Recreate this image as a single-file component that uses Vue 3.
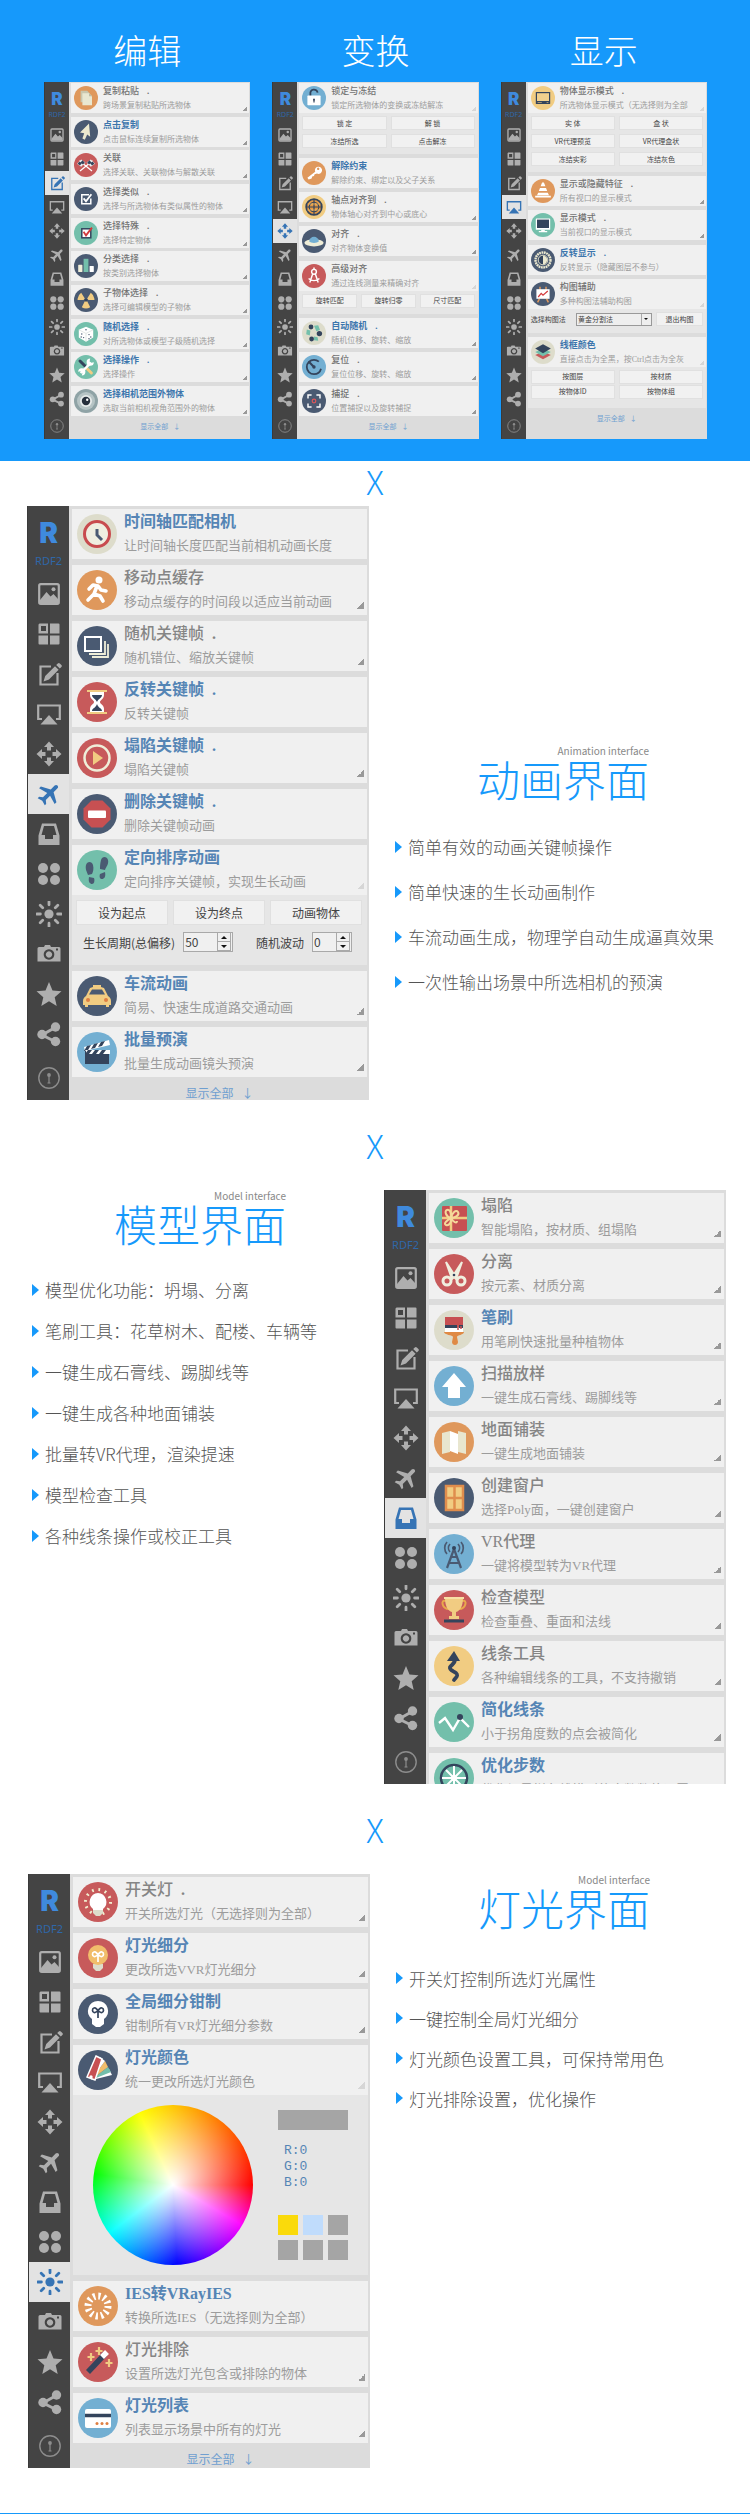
<script setup>
const NAVY = '#4a5a72'
const RED = '#c75a5b'
const ORANGE = '#df985c'
const GREEN = '#73bfab'
const BLUE = '#73afd2'
const CREAM = '#dddccb'
const YELLOW = '#f1cc82'

const navIcons = {
  图像: '<rect x="3.2" y="3.2" width="19.6" height="19.6" rx="1.5" fill="none" stroke="currentColor" stroke-width="2.2"/><circle cx="17.5" cy="8.2" r="2" fill="currentColor"/><path d="M4 19l6.500-8 4 4.500 3-2.500 4.500 5v4H4z" fill="currentColor"/>',
  布局: '<path d="M3.500 2.500h8.500v10H2.500v-9zM5 5v5h5V5z" fill-rule="evenodd" fill="currentColor"/><path d="M14 2.500h8.500a1 1 0 0 1 1 1v9H14zM2.500 14.500H12v9H3.500a1 1 0 0 1-1-1zM14 14.500h9.500v8a1 1 0 0 1-1 1H14z" fill="currentColor"/>',
  编辑: '<path d="M15 5.500H4.500v18h17V12" fill="none" stroke="currentColor" stroke-width="2.200"/><path d="M7.500 20.500l1.700-5.500L19 5.200l3.600 3.600L13 18.500zM20.200 4l1.600-1.600a1.500 1.500 0 0 1 2 0l1.600 1.600a1.500 1.500 0 0 1 0 2l-1.600 1.600z" fill="currentColor"/>',
  显示: '<path d="M6 18H2.200V4.500h21.600V18H20" fill="none" stroke="currentColor" stroke-width="2.200"/><path d="M13 14l8.500 9.500h-17z" fill="currentColor"/>',
  变换: '<path d="M13 .5l5 5.500h-3v3.500h-4V6H8zM13 25.500L8 20h3v-3.500h4V20h3zM.5 13L6 8v3h3.500v4H6v3zM25.500 13L20 18v-3h-3.500v-4H20V8z" fill="currentColor"/>',
  动画: '<path transform="rotate(45 13 13) translate(1 0)" d="M23 16v-2.500l-9-5V3c0-1.200-.9-2-2-2s-2 .8-2 2v5.500l-9 5V16l9-2.500v6l-3 2.500v2l5-1.500 5 1.500v-2l-3-2.500v-6z" fill="currentColor"/>',
  模型: '<path d="M6 2.500h14l3.500 12V24h-21v-9.500zM8 5l-2.500 9H9v4h8v-4h3.500L18 5z" fill-rule="evenodd" fill="currentColor"/>',
  组件: '<g fill="currentColor"><circle cx="7" cy="7" r="5"/><circle cx="19" cy="7" r="5"/><circle cx="7" cy="19" r="5"/><circle cx="19" cy="19" r="5"/></g>',
  灯光: '<circle cx="13" cy="13" r="4.600" fill="currentColor"/><path d="M13 .8v3M13 22.200v3M.8 13h3.600M21.600 13h3.600M4.200 4.200l2.500 2.500M19.300 19.300l2.500 2.500M4.200 21.800l2.500-2.500M19.300 6.700l2.500-2.500" stroke="currentColor" stroke-width="2.800" stroke-linecap="round"/>',
  相机: '<path d="M3 6h5l1-2h5l1 2h8a1.500 1.500 0 0 1 1.500 1.500v13H1.500v-13A1.500 1.500 0 0 1 3 6zM13 8.200a5.300 5.300 0 1 0 .01 0zM13 10.300a3.200 3.200 0 1 1-.01 0zM20 7.500v2h2v-2z" fill-rule="evenodd" fill="currentColor"/>',
  收藏: '<path d="M13 1l3.500 8.500 9 .8-6.800 6 2 8.700-7.700-4.700L5.300 25l2-8.700-6.800-6 9-.8z" fill="currentColor"/>',
  分享: '<path d="M6 14l14-8M6 14l14 7" stroke="currentColor" stroke-width="3"/><g fill="currentColor"><circle cx="6" cy="13.500" r="4.700"/><circle cx="19.500" cy="6" r="4.700"/><circle cx="19.500" cy="20.500" r="4.700"/></g>',
}
const infoIcon = '<circle cx="13" cy="13" r="10.200" fill="none" stroke="currentColor" stroke-width="1.400"/><circle cx="13" cy="10" r="1.900" fill="currentColor"/><path d="M13 11v7M11.500 18h3" stroke="currentColor" stroke-width="1.200"/>'

const bulbLoop = (c) => `<path d="M20 24v-8M20 17c-1 0-2 2-4 1.500s-2-4 0-4.500 3 1 4 3c1-2 2-3.500 4-3s2 4 0 4.500-3-1.500-4-1.500z" fill="none" stroke="${c}" stroke-width="1.700"/>`

const art = {
  copy: [ORANGE, '<path d="M11 8h11l4 4v15H11z" fill="#c9c7ae"/><path d="M14 12h11l5 5v15H14z" fill="#e9e7d0"/><path d="M25 12v5h5z" fill="#bdbba4"/>'],
  cursor: [NAVY, '<path d="M25 6L10 21l7 1-3 9 4 2 4-9 5 4z" fill="#ece9cf"/>'],
  flags: [RED, '<path d="M9 13l21 17M31 13L10 30" stroke="#fff" stroke-width="2"/><path d="M5 18l7-7 7 5-7 7zM35 18l-7-7-7 5 7 7z" fill="#eee"/><path d="M9 14l4 3-3 4-4-3zM14 12l4 4-3 3-4-3zM31 14l-4 3 3 4 4-3zM26 12l-4 4 3 3 4-3z" fill="#34445c"/>'],
  check: [NAVY, '<path d="M25 13H13v15h15V19" fill="none" stroke="#fff" stroke-width="2.500"/><path d="M16 19l4 5 9-12" fill="none" stroke="#fff" stroke-width="3"/>'],
  checkRed: [GREEN, '<rect x="13" y="13" width="15" height="15" fill="#fff" stroke="#34445c" stroke-width="2.500"/><path d="M16 18l4 6 10-13" fill="none" stroke="#d2393c" stroke-width="3"/>'],
  bars: [NAVY, '<rect x="7" y="18" width="7" height="12" rx="1" fill="#f0efd9"/><rect x="16" y="8" width="8" height="22" fill="#73bfab"/><rect x="26" y="20" width="7" height="10" rx="1" fill="#fff"/>'],
  nuclear: [NAVY, '<g fill="#f1cc82"><path d="M6 18a14 14 0 0 1 6-10l6 9.500-2 2.500H6zM34 18a14 14 0 0 0-6-10l-6 9.500 2 2.500h10zM13 32a14 14 0 0 0 14 0l-5-10h-4z"/></g><circle cx="20" cy="20" r="2.500" fill="#34445c"/>'],
  dice: [GREEN, '<path d="M20 8l12 5v13l-12 7-12-7V13z" fill="#fff"/><path d="M8 13l12 6 12-6M20 19v14" fill="none" stroke="#cfd6d3"/><g fill="#4a5a72"><circle cx="20" cy="13" r="1.300"/><circle cx="13" cy="20" r="1.200"/><circle cx="16" cy="26" r="1.200"/><circle cx="12" cy="25" r="1.200"/><circle cx="25" cy="21" r="1.200"/><circle cx="28" cy="25" r="1.200"/><circle cx="25" cy="28" r="1.200"/></g>'],
  tools: [GREEN, '<path d="M10 10l8 8" stroke="#34445c" stroke-width="5" stroke-linecap="round"/><path d="M21 22l8 8" stroke="#f1cc82" stroke-width="5" stroke-linecap="round"/><path d="M11 30l17-17" stroke="#fff" stroke-width="4"/><path d="M33 12a6 6 0 1 1-6-6l-1 5 3 2zM7 28a6 6 0 1 1 6 6l1-4-3-3z" fill="#fff"/>'],
  lens: ['#8fa3a6', '<circle cx="20" cy="20" r="15" fill="#b6c4c5"/><circle cx="20" cy="20" r="10" fill="#e6ebea"/><circle cx="20" cy="20" r="7" fill="#26303c"/><circle cx="22" cy="18" r="2" fill="#fff"/>'],
  lock: [BLUE, '<path d="M14 17v-4a6 6 0 0 1 12-2" fill="none" stroke="#34445c" stroke-width="3"/><rect x="9" y="16" width="22" height="16" rx="1" fill="#fff"/><path d="M20 21a2 2 0 0 1 1 3.500v3h-2v-3A2 2 0 0 1 20 21z" fill="#34445c"/>'],
  key: [ORANGE, '<path d="M22 18a6 6 0 1 1 3 3l-4 1-1 3-3 1-1 3-5 2-2-3zM27 11a2 2 0 1 0 .01 0z" fill="#fff" fill-rule="evenodd"/>'],
  axis: [YELLOW, '<circle cx="20" cy="20" r="13" fill="#e59a45" stroke="#34445c" stroke-width="3"/><path d="M20 7v26M7 20h26" stroke="#34445c" stroke-width="2"/><circle cx="20" cy="20" r="8" fill="none" stroke="#34445c" stroke-width="1.800"/><path d="M9 15h22M9 25h22" stroke="#f1cc82"/>'],
  ufo: [NAVY, '<ellipse cx="20" cy="23" rx="16" ry="6" fill="#efedd7"/><path d="M12 21a8 8 0 0 1 16 0c-3 3-13 3-16 0z" fill="#73afd2"/>'],
  compass: [RED, '<path d="M19 13l-6 18M21 13l6 18M11 24c5 5 13 5 18 0" fill="none" stroke="#fff" stroke-width="2.400"/><circle cx="20" cy="13" r="4" fill="#c75a5b" stroke="#fff" stroke-width="2.400"/><path d="M20 6v4" stroke="#fff" stroke-width="2.500"/>'],
  recycle: [CREAM, '<g fill="#34445c"><circle cx="15" cy="10" r="4"/><circle cx="29" cy="21" r="4.500"/><circle cx="16" cy="30" r="4"/></g><g fill="#73bfab"><path d="M20 8l7-1 3 8-6 2zM8 14l6 2-1 8-6-2zM20 26l6 1 1 6-7-1z"/></g>'],
  timer: [BLUE, '<circle cx="20" cy="20" r="12" fill="none" stroke="#34445c" stroke-width="3" stroke-dasharray="62 14" stroke-dashoffset="-3"/><path d="M11 11l9 9" stroke="#34445c" stroke-width="3.500"/><circle cx="20" cy="20" r="2.800" fill="#34445c"/>'],
  snap: [NAVY, '<path d="M10 16v-6h6M24 10h6v6M30 24v6h-6M16 30h-6v-6" fill="none" stroke="#fff" stroke-width="2.400"/><circle cx="20" cy="20" r="3" fill="none" stroke="#e0565a" stroke-width="2"/>'],
  screen: [YELLOW, '<rect x="8" y="10" width="24" height="20" rx="1" fill="#34445c"/><rect x="10" y="12" width="20" height="13" fill="#f1d08d"/><path d="M11 27.500h7M26 27.500h3" stroke="#f1cc82"/>'],
  cone: [ORANGE, '<path d="M18.500 6h3l2.500 6h-8zM15 15h10l2 5H13zM12 23h16l2 4H10zM7 28h26v3H7z" fill="#fff"/>'],
  monitor: [GREEN, '<rect x="8" y="9" width="24" height="19" rx="1" fill="#fff"/><rect x="10" y="11" width="20" height="14" fill="#34445c"/><path d="M17 28h6v2h4v2H13v-2h4z" fill="#fff"/>'],
  invert: [NAVY, '<circle cx="20" cy="20" r="12.500" fill="none" stroke="#ece9cf" stroke-width="4" stroke-dasharray="3 1"/><circle cx="20" cy="20" r="8" fill="#34445c" stroke="#ece9cf" stroke-width="1.500"/><path d="M20 13a7 7 0 0 1 0 14z" fill="#ece9cf"/>'],
  board: [NAVY, '<path d="M15 8v6M25 8v6M14 28l-3 6M26 28l3 6" stroke="#df985c" stroke-width="2.500"/><rect x="9" y="12" width="22" height="16" fill="#fff"/><path d="M12 25l5-6 3 3 8-7" fill="none" stroke="#d2393c" stroke-width="2"/>'],
  layers: [CREAM, '<path d="M7 25l13 7 13-7-13-6z" fill="#c75a5b"/><path d="M7 20l13 7 13-7-13-6z" fill="#73bfab"/><path d="M7 14l13 8 13-8-13-7z" fill="#34445c"/>'],
  clock: [CREAM, '<circle cx="20" cy="20" r="12.500" fill="#efeee0" stroke="#c84b4e" stroke-width="3"/><path d="M20 15v6l5 5" fill="none" stroke="#4a5a72" stroke-width="3"/>'],
  runner: [ORANGE, '<circle cx="22" cy="10" r="3.500" fill="#fff"/><path d="M12 19l4-4 5 1 3 4 5 1M20 16l-3 8 6 2 3 5M17 24l-6 6" fill="none" stroke="#fff" stroke-width="3.600" stroke-linecap="round" stroke-linejoin="round"/>'],
  frames: [NAVY, '<path d="M15 31h16V18M12 28h16V15" fill="none" stroke="#efeed9" stroke-width="1.800"/><rect x="8" y="11" width="16" height="14" fill="#4a5a72" stroke="#fff" stroke-width="2"/>'],
  hourglass: [RED, '<path d="M13 9h14v4c0 4-4 5-4 7s4 3 4 7v5H13v-5c0-4 4-5 4-7s-4-3-4-7z" fill="#fff"/><path d="M15 13h10c0 3-4 4-5 7-1-3-5-4-5-7zM15 29c0-3 4-3 5-7 1 4 5 4 5 7z" fill="#34445c"/><path d="M10 9h20M10 31h20" stroke="#f1cc82" stroke-width="2.200"/>'],
  play: [RED, '<circle cx="20" cy="20" r="12.500" fill="none" stroke="#efeed9" stroke-width="2.500"/><path d="M16 13l10 7-10 7z" fill="#f1cc82"/>'],
  stop: [NAVY, '<path d="M14.500 6.500h11l8 8v11l-8 8h-11l-8-8v-11z" fill="#c75052"/><rect x="11" y="16.500" width="18" height="7.500" rx="1" fill="#fff"/>'],
  steps: [GREEN, '<g fill="#4a5a72"><path d="M9 15c1-4 6-4 7 0s0 7-1 9l-4 1c-1-3-3-6-2-10z"/><path d="M12 27l5 1c1 3 0 6-2 6s-4-2-3-7z"/><path d="M31 10c-1-4-6-4-7 0s-1 6-1 9l5 1c1-3 4-6 3-10z"/><path d="M28 22l-5 2c-1 3 0 5 2 5s4-2 3-7z"/></g>'],
  taxi: [NAVY, '<path d="M16 9h8v2l3 1 4 8c2 1 3 3 3 5v4h-2v2h-3v-2H11v2H8v-2H6v-4c0-2 1-4 3-5l4-8 3-1z" fill="#f1cc82"/><path d="M15 13.500h10l3 5H12z" fill="#4a5a72"/><circle cx="11" cy="24" r="2" fill="#df7f42"/><circle cx="29" cy="24" r="2" fill="#df7f42"/>'],
  clapper: [BLUE, '<path d="M7 15l25-7 1 5-25 6z" fill="#fff"/><path d="M10 14l-3 5 4-1 3-5zM17 12l-3 5 4-1 3-5zM24 10l-3 5 4-1 3-5zM8 18h24v14H8z" fill="#34445c"/><path d="M9 18h24v4H9z" fill="#fff"/><path d="M11 18l-3 4h4l3-4zM18 18l-3 4h4l3-4zM25 18l-3 4h4l3-4z" fill="#34445c"/>'],
  gift: [GREEN, '<rect x="8" y="8" width="25" height="25" rx="1" fill="#c75052"/><path d="M17 8v25M8 20h25" stroke="#f1cc82" stroke-width="2.500"/><path d="M17 20c-5-1-7-7-4-8s5 4 4 8c1-5 5-9 7-6s-3 6-7 6c-4 2-8 6-5 7s6-3 5-7c2 4 6 6 6 3" fill="none" stroke="#f5d99a" stroke-width="2"/>'],
  scissors: [RED, '<path d="M12 8l9 14-3 3zM28 8l-9 14 3 3z" fill="#f0efdf" stroke="#f0efdf" stroke-width="2"/><circle cx="13" cy="27" r="4" fill="none" stroke="#f0efdf" stroke-width="3"/><circle cx="27" cy="27" r="4" fill="none" stroke="#f0efdf" stroke-width="3"/><circle cx="20" cy="21" r="1.300" fill="#34445c"/>'],
  brush: [CREAM, '<rect x="11" y="7" width="18" height="10" fill="#c75052"/><path d="M11 15h12v2l2 2v-4h4v4H11z" fill="#34445c"/><path d="M11 18h18v4H11z" fill="#fff"/><path d="M10 22h20c0 3-7 3-7 5l1 5c0 4-6 4-6 0l1-5c0-2-9-2-9-5z" fill="#df8a45"/><path d="M24 16v4M27 16v3" stroke="#c75052" stroke-width="1.500"/>'],
  arrow: [BLUE, '<path d="M20 7l12 14h-6v11H14V21H8z" fill="#fff"/>'],
  map: [ORANGE, '<path d="M8 11l8-2v21l-8 2zM24 9l8 2v21l-8-2z" fill="#e8e6cf"/><path d="M16 9l8 3v20l-8-3z" fill="#fff"/>'],
  window: [NAVY, '<rect x="12" y="8" width="17" height="24" fill="#f1cc82" stroke="#df8d4d" stroke-width="2.500"/><path d="M20.500 8v24M12 20h17" stroke="#df8d4d" stroke-width="2.500"/>'],
  tower: [BLUE, '<path d="M20 15l-7 19M20 15l7 19M17 23h6M15 29h10" fill="none" stroke="#4a5a72" stroke-width="2.200"/><circle cx="20" cy="14" r="2" fill="#34445c"/><path d="M16 10a6 6 0 0 0 0 8M24 10a6 6 0 0 1 0 8M13 8a9 9 0 0 0 0 12M27 8a9 9 0 0 1 0 12" fill="none" stroke="#4a5a72" stroke-width="1.700"/>'],
  trophy: [RED, '<path d="M12 11c-6-2-4 8 3 8M28 11c6-2 4 8-3 8" fill="none" stroke="#e8a94c" stroke-width="2"/><path d="M11 8h18c0 8-3 13-7 14v4h3v3H15v-3h3v-4c-4-1-7-6-7-14z" fill="#f1cc82"/><path d="M10 8h20" stroke="#f8e0a6" stroke-width="2"/><path d="M10 31h20" stroke="#34445c" stroke-width="3"/>'],
  curve: [YELLOW, '<path d="M20 34c2-3 5-4 2-7-3-2-7-3-6-6 2-3 5-3 5-8" fill="none" stroke="#34445c" stroke-width="3.800" stroke-linecap="round"/><path d="M20 5l6 10H13z" fill="#34445c"/>'],
  line: [GREEN, '<path d="M5 21l6-5 8 12 7-12 9 9" fill="none" stroke="#fff" stroke-width="2.400"/><circle cx="26" cy="15" r="3" fill="#34445c"/>'],
  wheel: [GREEN, '<circle cx="20" cy="20" r="13" fill="#73bfab" stroke="#34445c" stroke-width="2.500"/><path d="M20 8v24M8 20h24M12 12l16 16M28 12L12 28" stroke="#fff" stroke-width="2"/><circle cx="20" cy="20" r="3" fill="#fff"/>'],
  bulb: [RED, '<circle cx="20" cy="20" r="12.500" fill="none" stroke="#f1efd0" stroke-width="3" stroke-dasharray="1.800 4.750"/><path d="M20 11a9 9 0 0 1 5 16v3H15v-3a9 9 0 0 1 5-16z" fill="#fff"/><path d="M15 28h10v3l-3 3h-4l-3-3z" fill="#dddccb"/>'],
  bulbYellow: [RED, '<path d="M15 26h10v4l-3 3h-4l-3-3z" fill="#dddccb"/><circle cx="20" cy="17" r="10" fill="#f1bd6b"/>' + bulbLoop('#fff')],
  bulbNavy: [NAVY, '<path d="M20 7a10 10 0 0 1 6 18v5l-4 3h-4l-4-3v-5a10 10 0 0 1 6-18z" fill="#fff"/>' + bulbLoop('#34445c')],
  fan: [NAVY, '<path d="M14 30L34 25l-3-6z" fill="#fff"/><path d="M13 30L33 22l-3-5z" fill="#73bfab"/><path d="M13 30L30 17l-3-6z" fill="#f1bd6b"/><path d="M13 30L27 11l-5-4z" fill="#fff"/><path d="M18 6l6 3-7 21-8-3z" fill="#c75052" stroke="#fff" stroke-width="1.500"/><circle cx="13" cy="27" r="1.700" fill="#fff"/>'],
  burst: [ORANGE, '<circle cx="20" cy="20" r="10" fill="none" stroke="#fff" stroke-width="7" stroke-dasharray="2.200 3.036"/>'],
  wand: [RED, '<path d="M10 30L27 12" stroke="#34445c" stroke-width="5.500"/><path d="M24 15l5-5" stroke="#fff" stroke-width="5.500"/><path d="M13 11v8M9.500 15h7M21 5v8M17.500 9h7M31 17v8M27.500 21h7" stroke="#f1cc82" stroke-width="2.200"/>'],
  card: [BLUE, '<rect x="7" y="11" width="26" height="19" rx="2" fill="#fff"/><path d="M7 17.500h26" stroke="#34445c" stroke-width="3.500"/><g fill="#df7f42"><circle cx="19" cy="25.500" r="1.500"/><circle cx="24" cy="25.500" r="1.500"/><circle cx="29" cy="25.500" r="1.500"/></g>'],
}

// corner: 1 = dark fold mark, 2 = pale fold mark (row is unfolded), 0 = none
const row = (icon, title, desc, blue = 0, dot = 0, corner = 1, body = null) => ({ icon, title, desc, blue, dot, corner, body })

const topSection = {
  kind: 'overview',
  panels: [
    {
      heading: '编辑', active: '编辑', rows: [
        row('copy', '复制粘贴', '跨场景复制粘贴所选物体', 0, 1),
        row('cursor', '点击复制', '点击鼠标连续复制所选物体', 1),
        row('flags', '关联', '选择关联、关联物体与解散关联'),
        row('check', '选择类似', '选择与所选物体有类似属性的物体', 0, 1),
        row('checkRed', '选择特殊', '选择特定物体', 0, 1),
        row('bars', '分类选择', '按类别选择物体', 0, 1),
        row('nuclear', '子物体选择', '选择可编辑模型的子物体', 0, 1),
        row('dice', '随机选择', '对所选物体或模型子级随机选择', 1, 1),
        row('tools', '选择操作', '选择操作', 1, 1),
        row('lens', '选择相机范围外物体', '选取当前相机视角范围外的物体', 1),
      ],
    },
    {
      heading: '变换', active: '变换', rows: [
        row('lock', '锁定与冻结', '锁定所选物体的变换或冻结解冻', 0, 0, 2, { buttons: [['锁 定', '解 锁'], ['冻结所选', '点击解冻']] }),
        row('key', '解除约束', '解除约束、绑定以及父子关系', 1, 0, 0),
        row('axis', '轴点对齐到', '物体轴心对齐到中心或底心', 0, 1),
        row('ufo', '对齐', '对齐物体变换值', 0, 1),
        row('compass', '高级对齐', '通过连线测量来精确对齐', 0, 0, 2, { buttons: [['旋转匹配', '旋转归零', '尺寸匹配']] }),
        row('recycle', '自动随机', '随机位移、旋转、缩放', 1, 1),
        row('timer', '复位', '复位位移、旋转、缩放', 0, 1),
        row('snap', '捕捉', '位置捕捉以及旋转捕捉', 0, 1),
      ],
    },
    {
      heading: '显示', active: '显示', rows: [
        row('screen', '物体显示模式', '所选物体显示模式（无选择则为全部', 0, 1, 2, { buttons: [['实 体', '盒 状'], ['VR代理预览', 'VR代理盒状'], ['冻结实彩', '冻结灰色']] }),
        row('cone', '显示或隐藏特征', '所有视口的显示模式', 0, 1),
        row('monitor', '显示模式', '当前视口的显示模式', 0, 1),
        row('invert', '反转显示', '反转显示（隐藏图层不参与）', 1, 1, 0),
        row('board', '构图辅助', '多种构图法辅助构图', 0, 0, 2, { select: true }),
        row('layers', '线框颜色', '直接点击为全黑，按Ctrl点击为全灰', 1, 0, 2, { tight: true, buttons: [['按图层', '按材质'], ['按物体ID', '按物体组']] }),
      ],
    },
  ],
}

const sections = [
  topSection,
  {
    kind: 'feature animation',
    copy: {
      label: 'Animation interface', title: '动画界面',
      points: ['简单有效的动画关键帧操作', '简单快速的生长动画制作', '车流动画生成，物理学自动生成逼真效果', '一次性输出场景中所选相机的预演'],
    },
    panels: [{
      active: '动画', rows: [
        row('clock', '时间轴匹配相机', '让时间轴长度匹配当前相机动画长度', 1, 0, 0),
        row('runner', '移动点缓存', '移动点缓存的时间段以适应当前动画'),
        row('frames', '随机关键帧', '随机错位、缩放关键帧', 0, 1),
        row('hourglass', '反转关键帧', '反转关键帧', 1, 1, 0),
        row('play', '塌陷关键帧', '塌陷关键帧', 1, 1),
        row('stop', '删除关键帧', '删除关键帧动画', 1, 1, 0),
        row('steps', '定向排序动画', '定向排序关键帧，实现生长动画', 1, 0, 2, { buttons: [['设为起点', '设为终点', '动画物体']], spinners: true }),
        row('taxi', '车流动画', '简易、快速生成道路交通动画', 1),
        row('clapper', '批量预演', '批量生成动画镜头预演', 1),
      ],
    }],
  },
  {
    kind: 'feature model',
    copy: {
      label: 'Model interface', title: '模型界面',
      points: ['模型优化功能：坍塌、分离', '笔刷工具：花草树木、配楼、车辆等', '一键生成石膏线、踢脚线等', '一键生成各种地面铺装', '批量转VR代理，渲染提速', '模型检查工具', '各种线条操作或校正工具'],
    },
    panels: [{
      active: '模型', rows: [
        row('gift', '塌陷', '智能塌陷，按材质、组塌陷'),
        row('scissors', '分离', '按元素、材质分离'),
        row('brush', '笔刷', '用笔刷快速批量种植物体', 1),
        row('arrow', '扫描放样', '一键生成石膏线、踢脚线等'),
        row('map', '地面铺装', '一键生成地面铺装'),
        row('window', '创建窗户', '选择Poly面，一键创建窗户'),
        row('tower', 'VR代理', '一键将模型转为VR代理'),
        row('trophy', '检查模型', '检查重叠、重面和法线'),
        row('curve', '线条工具', '各种编辑线条的工具，不支持撤销'),
        row('line', '简化线条', '小于拐角度数的点会被简化', 1),
        row('wheel', '优化步数', '优化场景样条线模型的步数数值设置', 1, 0, 0),
      ],
    }],
  },
  {
    kind: 'feature light',
    copy: {
      label: 'Model interface', title: '灯光界面',
      points: ['开关灯控制所选灯光属性', '一键控制全局灯光细分', '灯光颜色设置工具，可保持常用色', '灯光排除设置，优化操作'],
    },
    panels: [{
      active: '灯光', rows: [
        row('bulb', '开关灯', '开关所选灯光（无选择则为全部）', 0, 1),
        row('bulbYellow', '灯光细分', '更改所选VVR灯光细分', 1),
        row('bulbNavy', '全局细分钳制', '钳制所有VR灯光细分参数', 1),
        row('fan', '灯光颜色', '统一更改所选灯光颜色', 1, 0, 2, { wheel: true }),
        row('burst', 'IES转VRayIES', '转换所选IES（无选择则为全部）', 1, 0, 0),
        row('wand', '灯光排除', '设置所选灯光包含或排除的物体'),
        row('card', '灯光列表', '列表显示场景中所有的灯光', 1),
      ],
    }],
  },
]

const swatches = ['gold', 'sky', 'grey', 'grey', 'grey', 'grey']
const spinners = [
  { id: 'period', label: '生长周期(总偏移)', value: 50 },
  { id: 'jitter', label: '随机波动', value: 0 },
]
</script>

<template>
  <main class="page">
    <template v-for="(section, s) in sections" :key="s">
      <div v-if="s" class="divider" :class="{ first: s === 1 }">X</div>
      <section :class="section.kind">
        <div v-for="panel in section.panels" :key="panel.active" class="column">
          <h2 v-if="panel.heading" class="heading">{{ panel.heading }}</h2>
          <div class="panel">
            <nav class="rail">
              <div class="brand"><b>R</b><span>RDF2</span></div>
              <button
                v-for="(shape, name) in navIcons" :key="name" type="button"
                class="rail-item" :class="{ active: name === panel.active }" :aria-label="name"
              >
                <svg viewBox="0 0 26 26" v-html="shape"></svg>
              </button>
              <button type="button" class="rail-item info" aria-label="信息">
                <svg viewBox="0 0 26 26" v-html="infoIcon"></svg>
              </button>
            </nav>
            <div class="content">
              <div class="list">
                <article v-for="item in panel.rows" :key="item.title">
                  <div class="row">
                    <svg class="badge" viewBox="0 0 40 40">
                      <circle cx="20" cy="20" r="20" :fill="art[item.icon][0]" />
                      <g v-html="art[item.icon][1]"></g>
                    </svg>
                    <div class="words">
                      <h3 :class="{ blue: item.blue }">{{ item.title }}<span v-if="item.dot" class="dot">.</span></h3>
                      <p>{{ item.desc }}</p>
                    </div>
                    <i v-if="item.corner" class="corner" :class="{ pale: item.corner === 2 }"></i>
                  </div>
                  <div v-if="item.body" class="body" :class="{ tight: item.body.tight }">
                    <template v-if="item.body.buttons">
                      <div v-for="(line, l) in item.body.buttons" :key="l" class="buttons">
                        <button v-for="name in line" :key="name" type="button" class="push">{{ name }}</button>
                      </div>
                    </template>
                    <div v-if="item.body.spinners" class="spinners">
                      <div v-for="f in spinners" :key="f.id" class="field">
                        <label :for="f.id">{{ f.label }}</label>
                        <div class="spin" :class="f.id">
                          <input :id="f.id" type="number" :value="f.value">
                          <span class="arrows">
                            <button type="button" aria-label="增加"><i class="up"></i></button>
                            <button type="button" aria-label="减少"><i class="down"></i></button>
                          </span>
                        </div>
                      </div>
                    </div>
                    <div v-if="item.body.select" class="compose">
                      <label for="method">选择构图法</label>
                      <div class="drop">
                        <select id="method"><option>黄金分割法</option></select>
                        <span class="drop-mark"><i class="down"></i></span>
                      </div>
                      <button type="button" class="push">退出构图</button>
                    </div>
                    <div v-if="item.body.wheel" class="picker">
                      <div class="wheel"></div>
                      <div class="values">
                        <div class="sample"></div>
                        <ul class="rgb"><li>R:0</li><li>G:0</li><li>B:0</li></ul>
                        <div class="swatches">
                          <button v-for="(c, i) in swatches" :key="i" type="button" :class="c" :aria-label="'常用色 ' + (i + 1)"></button>
                        </div>
                      </div>
                    </div>
                  </div>
                </article>
              </div>
              <a href="#" class="more" :class="{ tall: panel.active === '显示' }">显示全部<span>↓</span></a>
            </div>
          </div>
        </div>
        <div v-if="section.copy" class="copy">
          <header>
            <p class="label">{{ section.copy.label }}</p>
            <h2>{{ section.copy.title }}</h2>
          </header>
          <ul class="points">
            <li v-for="point in section.copy.points" :key="point">{{ point }}</li>
          </ul>
        </div>
      </section>
    </template>
  </main>
</template>

<style>
body {
  background: #fff;
}
</style>

<style scoped>
* {
  box-sizing: border-box;
  margin: 0;
  padding: 0;
}

ul {
  list-style: none;
}

button, input, select {
  border: 0;
  border-radius: 0;
  font: inherit;
  color: inherit;
  background: none;
}

.page {
  font-family: "Noto Sans CJK SC", sans-serif;
  font-weight: 300;
  padding-bottom: 45px;
  border-bottom: 1px solid #1699fb;
}

.overview {
  display: grid;
  grid-template-columns: repeat(3, 1fr);
  gap: 22px;
  padding: 20px 43px 22px 44px;
  background: #1699fb;
}

.column {
  display: flex;
  flex-direction: column;
  min-width: 0;
}

.heading {
  height: 62px;
  line-height: 60px;
  font-size: 34px;
  font-weight: 300;
  text-align: center;
  color: #fff;
}

.divider {
  height: 90px;
  line-height: 90px;
  font-size: 33px;
  text-align: center;
  color: #1699fb;
}

.divider.first {
  height: 45px;
  line-height: 40px;
}

.feature {
  --row: 50px;
  --gap: 6px;
  --pad: 5px;
  --badge: 40px;
  --text-gap: 7px;
  --rail: 42px;
  --item: 40px;
  --glyph: 26px;
  --brand: 68px;
  --title: 16px;
  --title-line: 25px;
  --desc: 13px;
  --desc-line: 23px;
  --control: 12px;
  --push: 25px;
  --fold: 7px;
  --height: 594px;
  --top: 3px;
  display: grid;
  grid-template-columns: 342px 1fr;
  column-gap: 26px;
  padding: 0 20px 0 27px;
}

.overview {
  --row: 30px;
  --gap: 4px;
  --pad: 3px;
  --badge: 24px;
  --text-gap: 5px;
  --rail: 25px;
  --item: 24px;
  --glyph: 16px;
  --brand: 41px;
  --title: 9px;
  --title-line: 16px;
  --desc: 8px;
  --desc-line: 14px;
  --control: 7px;
  --push: 14px;
  --fold: 4px;
  --height: 357px;
  --top: 1px;
}

.feature.model {
  grid-template-columns: 1fr 342px;
  padding: 0 24px 0 32px;
}

.model .copy {
  order: -1;
}

.panel {
  display: flex;
  height: var(--height);
  overflow: hidden;
  background: #dcdcdc;
}

.rail {
  display: flex;
  flex-direction: column;
  flex: none;
  width: var(--rail);
  color: #aeaeae;
  background: #444;
  border-left: 1px solid #3a3a3a;
}

.brand {
  display: flex;
  flex-direction: column;
  align-items: center;
  height: var(--brand);
  font-family: Inter, sans-serif;
  color: #3f8add;
}

.brand b {
  margin-top: 11px;
  font-size: 28px;
  font-weight: 900;
  line-height: 32px;
}

.brand span {
  margin-top: 4px;
  font-family: "Noto Sans", sans-serif;
  font-size: 11px;
  font-weight: 400;
  line-height: 16px;
  color: #2f67a8;
}

.overview .brand b {
  margin-top: 7px;
  font-size: 17px;
  line-height: 20px;
}

.overview .brand span {
  margin-top: 1px;
  font-size: 7px;
  line-height: 10px;
}

.rail-item {
  display: flex;
  align-items: center;
  justify-content: center;
  flex: none;
  height: var(--item);
}

.rail-item svg {
  width: var(--glyph);
  height: var(--glyph);
}

.rail-item.active {
  color: #3674b5;
  background: #e3e3e3;
}

.rail-item.info {
  margin-top: 4px;
  color: #8d8d8d;
}

.overview .info {
  margin-top: 3px;
}

.content {
  display: flex;
  flex: 1;
  flex-direction: column;
  min-width: 0;
  padding: var(--top) 2px 0 3px;
}

.overview .content {
  padding: 1px 1px 0 2px;
}

.list {
  display: flex;
  flex-direction: column;
  gap: var(--gap);
}

.overview .list {
  flex: 1;
  gap: 0;
  justify-content: space-between;
}

.row {
  position: relative;
  display: flex;
  gap: var(--text-gap);
  height: var(--row);
  padding: 0 var(--pad);
  background: #f0f0f0;
}

.badge {
  flex: none;
  align-self: center;
  width: var(--badge);
  height: var(--badge);
}

.words {
  min-width: 0;
  font-family: "Liberation Serif", "Noto Sans CJK SC", sans-serif;
  white-space: nowrap;
}

.words h3 {
  font-size: var(--title);
  font-weight: 500;
  line-height: var(--title-line);
  color: #858585;
}

.overview .words h3 {
  color: #737373;
}

.words .blue,
.overview .words .blue {
  font-weight: 700;
  color: #5585b5;
}

.overview .words .blue {
  color: #3d76ad;
}

.dot {
  margin-left: 8px;
  font-weight: 700;
}

.words p {
  font-size: var(--desc);
  font-weight: 400;
  line-height: var(--desc-line);
  color: #9c9c9c;
}

.corner {
  position: absolute;
  right: 3px;
  bottom: 6px;
  width: var(--fold);
  height: var(--fold);
  background: linear-gradient(135deg, transparent 50%, #999 50%);
}

.overview .corner {
  right: 2px;
  bottom: 2px;
}

.corner.pale {
  background: linear-gradient(135deg, transparent 50%, #d6d6d6 50%);
}

.body {
  display: flex;
  flex-direction: column;
  gap: 4px;
  padding: 3px 3px 6px;
  font-size: var(--control);
  font-weight: 400;
  color: #444;
  background: #e6e6e6;
}

.body.tight {
  gap: 1px;
  padding-bottom: 9px;
}

.buttons {
  display: flex;
  gap: 4px;
}

.push {
  flex: 1;
  height: var(--push);
  line-height: 1;
  white-space: nowrap;
  background: #f1f1f1;
  border: 1px solid #e0e0e0;
}

.feature .body {
  gap: 7px;
  padding: 5px 5px 10px 4px;
}

.feature .buttons {
  gap: 5px;
}

.spinners {
  display: flex;
  justify-content: space-between;
  padding: 0 10px 3px 7px;
}

.field {
  display: flex;
  align-items: center;
  gap: 8px;
  height: 20px;
}

.spin {
  display: flex;
  width: 50px;
  height: 20px;
  padding: 0 1px;
  background: #f0f0f0;
  border: 1px solid #a9a9a9;
}

.spin.jitter {
  width: 40px;
}

.spin input {
  flex: 1;
  width: 0;
  line-height: 14px;
  appearance: textfield;
  outline: 0;
}

.spin input::-webkit-inner-spin-button {
  display: none;
}

.arrows {
  display: flex;
  flex-direction: column;
  width: 14px;
}

.arrows button {
  display: flex;
  flex: 1;
  align-items: center;
  justify-content: center;
  border: 1px solid #a9a9a9;
  border-width: 0 1px 1px;
}

.up, .down {
  border: 3px solid transparent;
  border-bottom-color: #111;
  border-top-width: 0;
}

.down {
  border-top: 3px solid #111;
  border-bottom: 0;
}

.compose {
  display: flex;
  align-items: center;
  gap: 4px;
  height: 15px;
}

.compose label {
  flex: 1;
  white-space: nowrap;
}

.compose .push {
  flex: none;
  width: 47px;
}

.drop {
  display: flex;
  width: 76px;
  height: 13px;
  background: #eee;
  border: 1px solid #999;
}

.drop select {
  flex: 1;
  min-width: 0;
  padding-left: 1px;
  appearance: none;
  line-height: 11px;
}

.drop-mark {
  display: flex;
  align-items: center;
  justify-content: center;
  width: 10px;
  border-left: 1px solid #aaa;
}

.drop .down {
  border-width: 2px 2px 0;
}

.picker {
  display: flex;
  justify-content: space-between;
  padding: 5px 15px 0 16px;
}

.wheel {
  width: 160px;
  height: 160px;
  border-radius: 50%;
  background:
    radial-gradient(closest-side, #fff, transparent),
    conic-gradient(from 90deg, #f00, #f0f 30deg, #00f 87deg, #0ff 143deg, #0f0 188deg, #ff0 245deg, #f00);
}

.values {
  width: 70px;
  padding-top: 5px;
}

.sample {
  height: 20px;
  background: #a5a5a5;
}

.rgb {
  margin: 13px 0 24px 6px;
  font: 13px/16px "Liberation Mono", monospace;
  color: #5585b5;
}

.swatches {
  display: grid;
  grid-template-columns: repeat(3, 1fr);
  gap: 5px;
}

.swatches button {
  height: 20px;
}

.gold {
  background: #fada0b;
}

.sky {
  background: #c0dcfc;
}

.grey {
  background: #a5a5a5;
}

.more {
  display: flex;
  flex: none;
  justify-content: center;
  gap: 8px;
  padding-top: 8px;
  font-size: 12px;
  font-weight: 400;
  line-height: 15px;
  text-decoration: none;
  color: #6f9fd0;
}

.overview .more {
  gap: 5px;
  height: 23px;
  padding-top: 5px;
  font-size: 7px;
  line-height: 10px;
}

.overview .more.tall {
  height: 31px;
}

.animation .copy {
  padding-top: 239px;
}

.light {
  padding-left: 28px;
}

.copy header {
  width: fit-content;
  margin-left: 82px;
}

.label {
  font-size: 10px;
  font-weight: 400;
  line-height: 12px;
  text-align: right;
  color: #888;
}

.copy h2 {
  margin-top: 4px;
  font-size: 43px;
  font-weight: 300;
  line-height: 34px;
  color: #1699fb;
}

.points {
  --pitch: 45px;
  margin-top: 29px;
}

.model .points {
  --pitch: 41px;
}

.light .points {
  --pitch: 40px;
  margin-top: 34px;
}

.points li {
  display: flex;
  align-items: center;
  gap: 6px;
  height: var(--pitch);
  font-size: 17px;
  white-space: nowrap;
  color: #555;
}

.points li::before {
  content: "";
  border: 6px solid transparent;
  border-left: 7px solid #1699fb;
  border-right: 0;
}
</style>
